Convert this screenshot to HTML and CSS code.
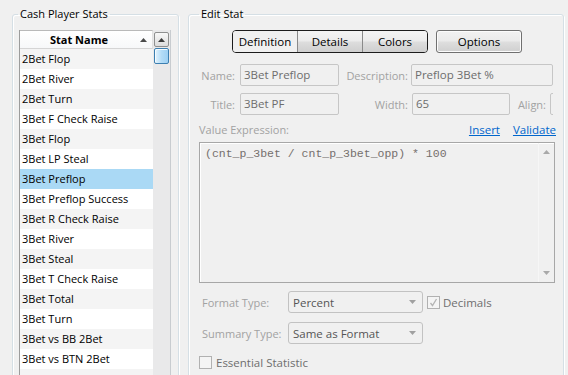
FILE: index.html
```html
<!DOCTYPE html>
<html>
<head>
<meta charset="utf-8">
<title>Cash Player Stats</title>
<link rel="stylesheet" href="styles.css">
</head>
<body>
<div class="app">
  <fieldset class="group left">
    <legend>Cash Player Stats</legend>
    <div class="grid">
      <div class="list">
        <div class="head"><span class="head-text">Stat Name</span><svg class="sort" width="7" height="4" viewBox="0 0 7 4"><path d="M0 4 L3.5 0 L7 4 Z" fill="#4a4a4a"/></svg></div>
        <div class="row alt">2Bet Flop</div>
        <div class="row">2Bet River</div>
        <div class="row alt">2Bet Turn</div>
        <div class="row">3Bet F Check Raise</div>
        <div class="row alt">3Bet Flop</div>
        <div class="row">3Bet LP Steal</div>
        <div class="row sel">3Bet Preflop</div>
        <div class="row">3Bet Preflop Success</div>
        <div class="row alt">3Bet R Check Raise</div>
        <div class="row">3Bet River</div>
        <div class="row alt">3Bet Steal</div>
        <div class="row">3Bet T Check Raise</div>
        <div class="row alt">3Bet Total</div>
        <div class="row">3Bet Turn</div>
        <div class="row alt">3Bet vs BB 2Bet</div>
        <div class="row">3Bet vs BTN 2Bet</div>
        <div class="row alt">3Bet vs BTN 3bet</div>
      </div>
      <div class="vscroll">
        <div class="sbtn"><svg width="7" height="4" viewBox="0 0 7 4"><path d="M0 4 L3.5 0 L7 4 Z" fill="#3c3c3c"/></svg></div>
        <div class="thumb"></div>
      </div>
    </div>
  </fieldset>

  <fieldset class="group right">
    <legend>Edit Stat</legend>
    <div class="toolbar">
      <div class="tabs">
        <div class="tab active t1">Definition</div>
        <div class="tab t2">Details</div>
        <div class="tab t3">Colors</div>
      </div>
      <div class="btn">Options</div>
    </div>

    <div class="frow first">
      <span class="lbl l1">Name:</span>
      <span class="box w99">3Bet Preflop</span>
      <span class="lbl l2">Description:</span>
      <span class="box w142">Preflop 3Bet %</span>
    </div>
    <div class="frow second">
      <span class="lbl l1">Title:</span>
      <span class="box w99">3Bet PF</span>
      <span class="lbl l2 l2b">Width:</span>
      <span class="box w98">65</span>
      <span class="lbl l3">Align:</span>
      <span class="box w40"></span>
    </div>

    <div class="vrow">
      <span class="lbl">Value Expression:</span>
      <span class="links"><a class="link">Insert</a><a class="link">Validate</a></span>
    </div>

    <div class="editor">
      <div class="code">(cnt_p_3bet / cnt_p_3bet_opp) * 100</div>
      <div class="tscroll">
        <svg width="7" height="4" viewBox="0 0 7 4"><path d="M0 4 L3.5 0 L7 4 Z" fill="#a9a9a9"/></svg>
        <svg width="7" height="4" viewBox="0 0 7 4"><path d="M0 0 L3.5 4 L7 0 Z" fill="#a9a9a9"/></svg>
      </div>
    </div>

    <div class="srow s1">
      <span class="lbl slbl">Format Type:</span>
      <span class="select"><span>Percent</span><svg width="7" height="4" viewBox="0 0 7 4"><path d="M0 0 L3.5 4 L7 0 Z" fill="#a0a0a0"/></svg></span>
      <span class="check checked"><svg width="11" height="11" viewBox="0 0 11 11"><path d="M2.5 6 L4.5 8.5 L8.5 2" fill="none" stroke="#b4b4b4" stroke-width="1.3"/></svg></span>
      <span class="ctext">Decimals</span>
    </div>
    <div class="srow s2">
      <span class="lbl slbl">Summary Type:</span>
      <span class="select"><span>Same as Format</span><svg width="7" height="4" viewBox="0 0 7 4"><path d="M0 0 L3.5 4 L7 0 Z" fill="#a0a0a0"/></svg></span>
    </div>
    <div class="crow">
      <span class="check"></span>
      <span class="ctext">Essential Statistic</span>
    </div>
  </fieldset>
</div>
</body>
</html>
```

FILE: styles.css
```css
* { box-sizing: border-box; }

html, body {
  margin: 0;
  padding: 0;
  background: #f0f0f0;
}

body {
  width: 568px;
  height: 375px;
  overflow: hidden;
  font-family: "Open Sans", "Noto Sans", sans-serif;
  font-size: 11px;
  color: #000;
}

.app {
  display: flex;
  align-items: flex-start;
  gap: 9px;
  padding: 7px 0 0 12px;
  height: 375px;
  overflow: hidden;
}

.group {
  margin: 0;
  border: 1px solid #d5dfe5;
  border-radius: 3px;
  min-width: 0;
  height: 420px;
  box-shadow: inset 1px 1px 0 #fff, 1px 1px 0 #fff;
}

.group legend {
  height: 14px;
  line-height: 14px;
  padding: 0 2px;
}

.left {
  width: 167px;
  padding: 9px 7px 0 6px;
}
.left legend { margin-left: -1px; }

.right {
  width: 376px;
  padding: 9px 8px 0 10px;
}
.right legend { margin-left: 0; }

/* grid */
.grid {
  display: flex;
  width: 152px;
  height: 360px;
  border-left: 1px solid #9c9c9c;
  border-right: 1px solid #c8ccd0;
  background: #fff;
}

.list {
  flex: 1;
  min-width: 0;
  overflow: hidden;
}

.head {
  display: flex;
  align-items: center;
  height: 19px;
  border-top: 1px solid #b9b9b9;
  border-bottom: 1px solid #d5d5d5;
  border-right: 1px solid #e2e2e2;
  background: linear-gradient(#ffffff, #f7f8f9);
  font-weight: 700;
  padding-left: 30px;
}
.head-text { flex: 1; }
.sort { margin-right: 5px; }

.row {
  height: 20px;
  line-height: 20px;
  padding-left: 2px;
  white-space: nowrap;
  background: #fff;
}
.row.alt { background: #f4f4f4; }
.row.sel { background: #aad9f5; }

.vscroll {
  width: 17px;
  flex: none;
  background: #e9e9ea;
  padding: 2px 0 0 1px;
}

.sbtn {
  width: 15px;
  height: 15px;
  border: 1px solid #8e8f8f;
  border-radius: 2px;
  background: linear-gradient(#f8f8f8, #dcdcdc);
  display: flex;
  align-items: center;
  justify-content: center;
}

.thumb {
  width: 15px;
  height: 16px;
  margin-top: 1px;
  border: 1px solid #3c7fb1;
  border-radius: 2px;
  background: linear-gradient(90deg, #e3f3fd, #b3dcf7 50%, #9dd0f3);
  box-shadow: inset 1px 1px 0 #f4fbff;
}

/* toolbar */
.toolbar {
  display: flex;
  justify-content: center;
  gap: 8px;
  height: 23px;
}

.tabs {
  display: flex;
  border: 1px solid #1c1c1c;
  border-radius: 4px;
  overflow: hidden;
}

.tab {
  display: flex;
  align-items: center;
  justify-content: center;
  background: linear-gradient(#f4f4f4 0%, #ececec 45%, #dcdcdc 55%, #cfcfcf 100%);
  font-size: 11.5px;
}
.t1 { width: 64px; }
.t2 { width: 65px; border-left: 1px solid #8a8a8a; }
.t3 { width: 65px; border-left: 1px solid #8a8a8a; }
.tab.active { background: #f0f0f0; }

.btn {
  width: 86px;
  display: flex;
  align-items: center;
  justify-content: center;
  border: 1px solid #707070;
  border-radius: 3px;
  background: linear-gradient(#f2f2f2 0%, #ebebeb 45%, #dddddd 55%, #cfcfcf 100%);
  box-shadow: inset 0 0 0 1px #fcfcfc;
  font-size: 11.5px;
}

/* form rows */
.frow {
  display: flex;
  align-items: center;
  height: 22px;
  width: 354px;
  overflow: hidden;
}
.frow.first { margin-top: 11px; }
.frow.second { margin-top: 7px; }

.lbl {
  color: #a2a2a2;
  white-space: nowrap;
}
.l1 { width: 36px; text-align: right; margin-right: 5px; flex: none; }
.l2 { width: 69px; text-align: right; margin-right: 3px; flex: none; }
.l2b { margin-right: 4px; }
.l3 { width: 31px; margin-left: 5px; margin-right: 4px; flex: none; text-align: right; }

.box {
  flex: none;
  height: 22px;
  line-height: 20px;
  border: 1px solid #c6c6c6;
  border-radius: 2px;
  background: #f0f0f0;
  padding-left: 3px;
  color: #6d6d6d;
  font-size: 11.5px;
  white-space: nowrap;
}
.w99 { width: 99px; }
.w142 { width: 142px; }
.w98 { width: 98px; }
.w40 { width: 40px; }

.vrow {
  display: flex;
  align-items: center;
  height: 16px;
  margin-top: 6px;
}
.links {
  margin-left: auto;
  margin-right: -1px;
  display: flex;
  gap: 13px;
}
.link {
  color: #0066cc;
  text-decoration: underline;
  font-size: 11.5px;
}

.editor {
  display: flex;
  margin-top: 5px;
  height: 141px;
  border: 1px solid #a7a7a7;
  box-shadow: inset 1px 1px 0 #fff;
  background: #f0f0f0;
}
.code {
  flex: 1;
  padding: 4px 0 0 5px;
  font-family: "Liberation Mono", monospace;
  font-size: 11.5px;
  line-height: 14px;
  color: #756f6d;
  white-space: pre;
}
.tscroll {
  width: 16px;
  flex: none;
  display: flex;
  flex-direction: column;
  align-items: center;
  justify-content: space-between;
  padding: 7px 0 7px 0;
  border-left: 1px solid #f6f6f6;
}

.srow {
  display: flex;
  align-items: center;
  height: 22px;
}
.s1 { margin-top: 8px; }
.s2 { margin-top: 9px; }

.slbl {
  width: 89px;
  padding-left: 3px;
  flex: none;
}

.select {
  width: 135px;
  height: 22px;
  flex: none;
  display: flex;
  align-items: center;
  justify-content: space-between;
  border: 1px solid #c2c2c2;
  border-radius: 3px;
  background: #f0f0f0;
  padding: 0 6px 0 4px;
  color: #555;
  font-size: 11.5px;
}

.check {
  width: 13px;
  height: 13px;
  flex: none;
  border: 1px solid #b1b1b1;
  background: #f4f4f4;
  display: flex;
  align-items: center;
  justify-content: center;
}
.srow .check { margin-left: 4px; }
.srow .ctext { margin-left: 3px; }

.ctext {
  margin-left: 4px;
  color: #6e6e6e;
  font-size: 11.5px;
}

.crow {
  display: flex;
  align-items: center;
  margin-top: 12px;
  height: 13px;
}
```
